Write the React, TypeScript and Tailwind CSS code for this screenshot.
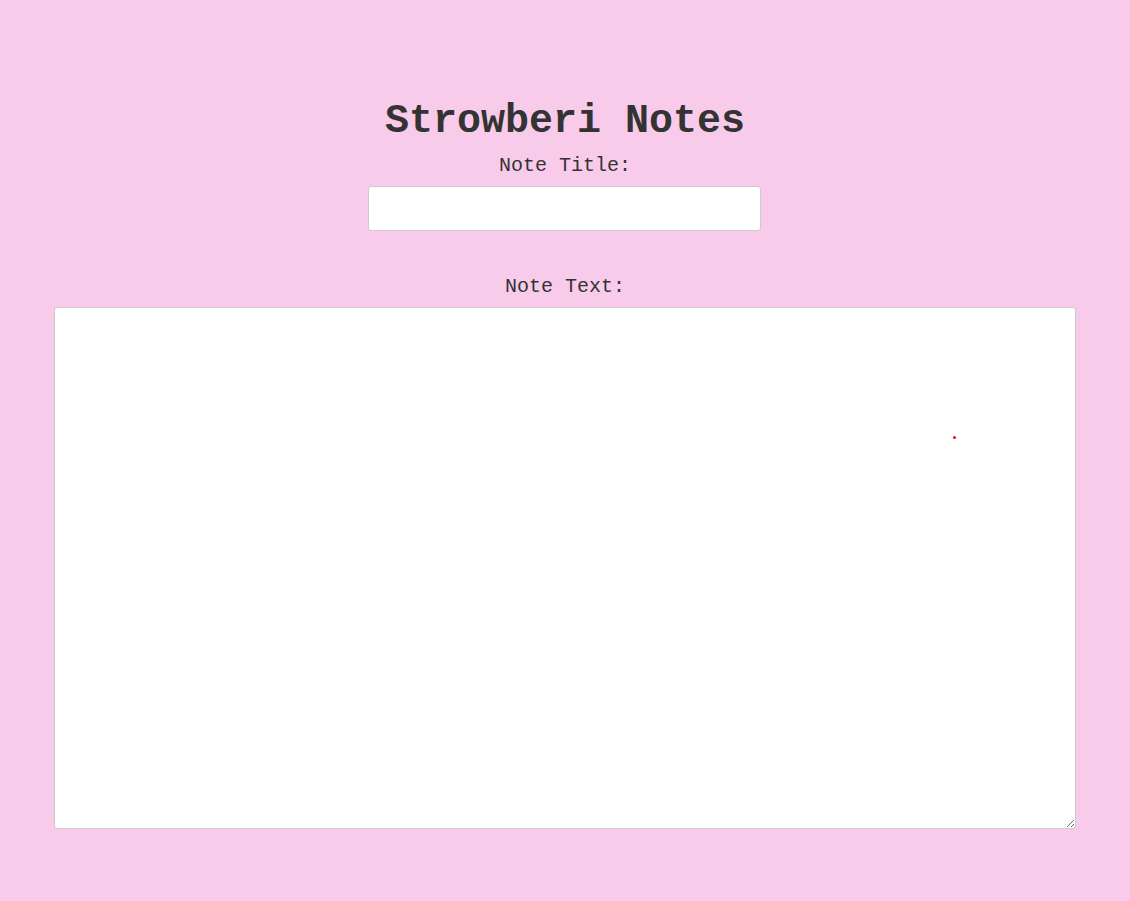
import { useState } from 'react';

const App = () => {
  const [title, setTitle] = useState('');
  const [text, setText] = useState('');

  return (
    <div className="relative min-h-[901px] bg-[#f9cbeb] font-['Liberation_Mono','Courier_New',monospace] text-[#333333]">
      <div className="flex flex-col items-center pt-[98px]">
        {/* Heading */}
        <h1 className="text-[40px] leading-[48px] font-bold">Strowberi Notes</h1>

        <label htmlFor="note-title" className="mt-[8px] text-[20px] leading-[24px]">
          Note Title:
        </label>
        <input
          id="note-title"
          type="text"
          value={title}
          onChange={(e) => setTitle(e.target.value)}
          className="mt-[8px] mr-[1px] w-[393px] h-[45px] bg-white border border-[#cccccc] rounded-[3px] px-2 outline-none"
        />

        <label htmlFor="note-text" className="mt-[44px] text-[20px] leading-[24px]">
          Note Text:
        </label>
        <textarea
          id="note-text"
          value={text}
          onChange={(e) => setText(e.target.value)}
          className="mt-[8px] w-[1022px] h-[522px] bg-white border border-[#cccccc] rounded-[3px] p-2 outline-none"
        />
      </div>

      {/* tiny red cursor dot */}
      <span className="absolute left-[953px] top-[436px] w-[3px] h-[3px] rounded-full bg-[#ff0000]" />
    </div>
  );
};

export default App;
